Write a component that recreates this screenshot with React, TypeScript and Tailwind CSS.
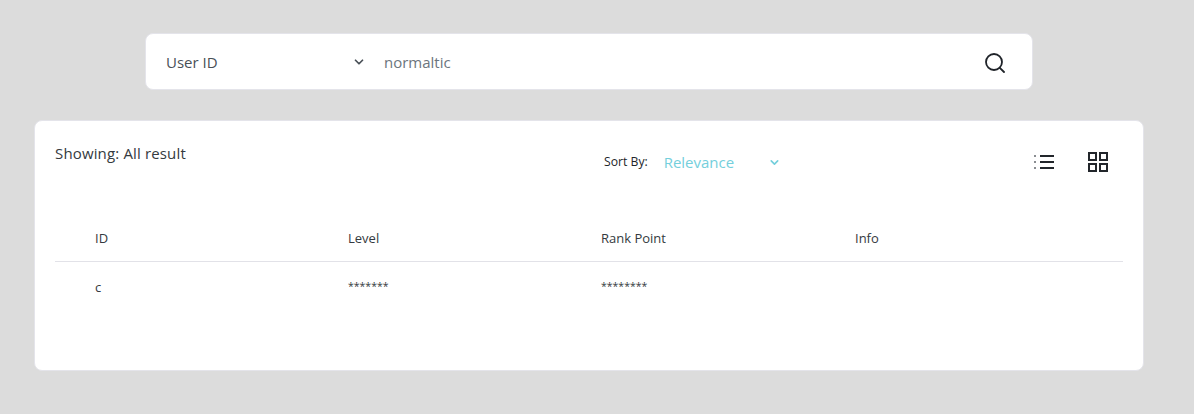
import React from 'react';
import { ChevronDown } from 'lucide-react';

const columns = ['ID', 'Level', 'Rank Point', 'Info'];

function SearchIcon() {
  return (
    <svg className="mt-[2px]" width="20" height="20" viewBox="0 0 20 20" fill="none" stroke="#1f2329" strokeWidth="1.8">
      <circle cx="9" cy="9" r="8" />
      <path d="M14.8 14.8 L19 19" strokeLinecap="round" />
    </svg>
  );
}

function ListIcon() {
  return (
    <svg width="20" height="16" viewBox="0 0 20 16" fill="none">
      <path d="M6 2h14M6 8h14M6 14h14" stroke="#22262b" strokeWidth="2" />
      <path d="M0 2h2M0 8h2M0 14h2" stroke="#8a8d91" strokeWidth="2" />
    </svg>
  );
}

function GridIcon() {
  return (
    <svg width="20" height="20" viewBox="0 0 20 20" fill="none" stroke="#22262b" strokeWidth="2">
      <rect x="1" y="1" width="7" height="7" />
      <rect x="12" y="1" width="7" height="7" />
      <rect x="1" y="12" width="7" height="7" />
      <rect x="12" y="12" width="7" height="7" />
    </svg>
  );
}

export default function App() {
  return (
    <div className="h-[414px] w-[1194px] overflow-hidden bg-[#dcdcdc] pt-[33px] pl-[34px] font-['Open_Sans',sans-serif] text-[#343a40]">
      <div className="ml-[111px] flex h-[57px] w-[888px] items-center rounded-lg border border-[#e4e4ea] bg-white pl-5 pr-[27px]">
        <div className="flex w-[201px] items-center justify-between text-[15px] text-[#495057]">
          <span className="pt-[2px]">User ID</span>
          <ChevronDown size={14} strokeWidth={3} className="mr-[1px] text-[#495057]" />
        </div>
        <span className="ml-[17px] flex-1 pt-[2px] text-[15px] text-[#6c757d]">normaltic</span>
        <SearchIcon />
      </div>

      <div className="mt-[30px] h-[251px] w-[1110px] rounded-lg border border-[#e4e4ea] bg-white px-5 pt-[22px]">
        <div className="flex h-[40px] items-start">
          <span className="w-[549px] text-[15px] leading-5 tracking-[0.01em] text-[#343a40]">Showing: All result</span>
          <div className="mt-[9px] flex w-[177px] items-center">
            <span className="w-[60px] text-[12.2px] leading-5 text-[#212529]">Sort By:</span>
            <span className="w-[105px] text-[15px] leading-5 text-[#74cfdc]">Relevance</span>
            <ChevronDown size={13} strokeWidth={3} className="text-[#74cfdc]" />
          </div>
          <div className="ml-[253px] mt-[9px] flex items-center gap-[34px]">
            <ListIcon />
            <GridIcon />
          </div>
        </div>

        <div className="mt-[32px] grid h-[47px] grid-cols-[253px_253px_254px_308px] items-center border-b border-[#e2e2e8]">
          {columns.map((c) => (
            <span key={c} className="pl-10 pt-[2px] text-[13px] text-[#343a40]">{c}</span>
          ))}
        </div>
        <div className="grid h-[50px] grid-cols-[253px_253px_254px_308px] items-center">
          <span className="pl-10 pt-[2px] text-[13px] text-[#343a40]">c</span>
          <span className="pl-10 text-[10.5px] text-[#343a40]">*******</span>
          <span className="pl-10 text-[10.5px] text-[#343a40]">********</span>
          <span />
        </div>
      </div>
    </div>
  );
}
